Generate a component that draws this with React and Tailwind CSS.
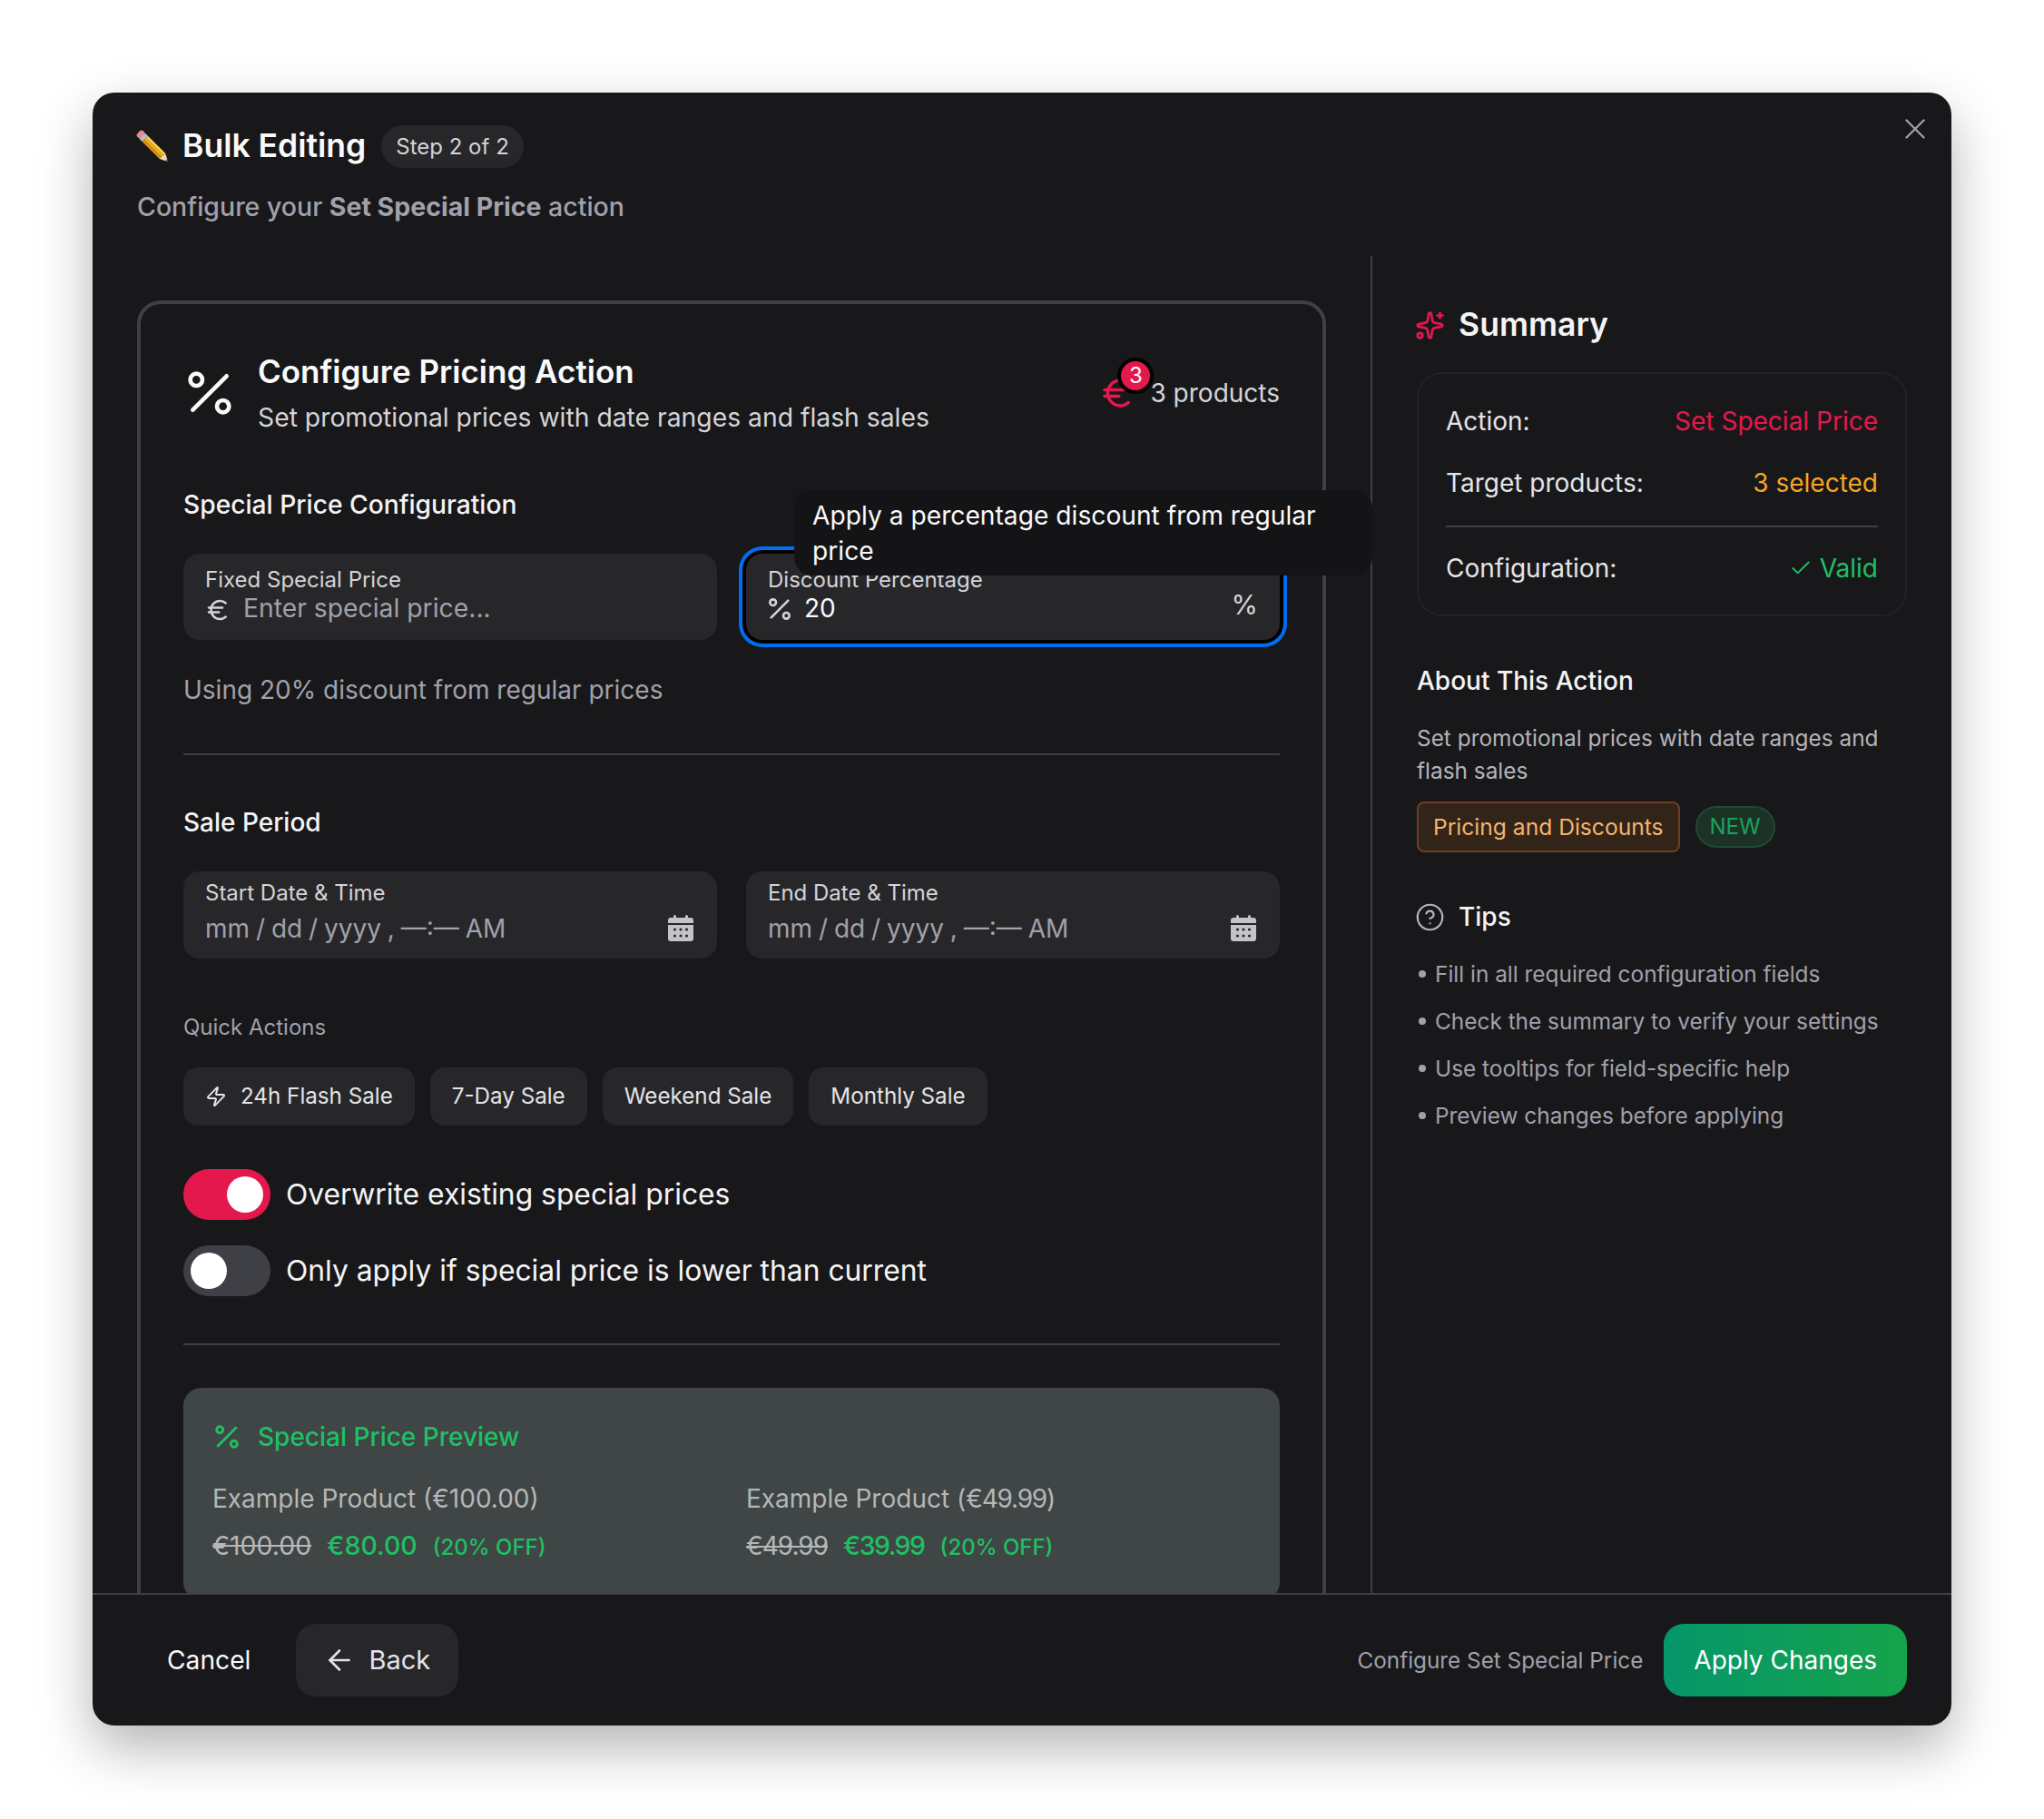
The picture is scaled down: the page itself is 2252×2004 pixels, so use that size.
import { ArrowLeft, Check, CircleHelp, Euro, Percent, Sparkles, X, Zap } from "lucide-react";

function PencilIcon() {
  return (
    <svg width="36" height="36" viewBox="0 0 36 36" className="shrink-0 overflow-visible">
      <g transform="rotate(45 18 18)">
        <rect x="-5" y="13.5" width="7" height="9" rx="2.5" fill="#e58a93" />
        <rect x="1" y="13.5" width="4" height="9" fill="#b8bcc0" />
        <rect x="5" y="13.5" width="27" height="3" fill="#fcd34d" />
        <rect x="5" y="16.5" width="27" height="3" fill="#f5b21b" />
        <rect x="5" y="19.5" width="27" height="3" fill="#d9920f" />
        <path d="M32 13.5 L41 18 L32 22.5 Z" fill="#f3d9b1" />
        <path d="M38 16.5 L41 18 L38 19.5 Z" fill="#3f3f46" />
      </g>
    </svg>
  );
}

function CalendarIcon() {
  return (
    <svg width="32" height="32" viewBox="0 0 32 32" className="shrink-0 text-[#c4c4c8]" fill="currentColor">
      <rect x="8" y="1" width="3" height="6" rx="1.5" />
      <rect x="21" y="1" width="3" height="6" rx="1.5" />
      <path d="M5 4h22a3 3 0 0 1 3 3v3H2V7a3 3 0 0 1 3-3z" />
      <path d="M2 12h28v15a3 3 0 0 1-3 3H5a3 3 0 0 1-3-3z" />
      <g fill="#27272a">
        <circle cx="9.5" cy="17" r="1.6" />
        <circle cx="16" cy="17" r="1.6" />
        <circle cx="22.5" cy="17" r="1.6" />
        <circle cx="9.5" cy="24" r="1.6" />
        <circle cx="16" cy="24" r="1.6" />
        <circle cx="22.5" cy="24" r="1.6" />
      </g>
    </svg>
  );
}

function DateField({ label }) {
  return (
    <div className="h-[96px] rounded-[18px] bg-[#27272a] px-6 pt-[8px]">
      <div className="text-[24px] leading-[32px] text-[#d4d4d8]">{label}</div>
      <div className="mt-[5px] flex items-center justify-between">
        <span className="text-[28px] leading-[36px] text-[#a1a1aa] [word-spacing:-1px]">mm / dd / yyyy , —:— AM</span>
        <CalendarIcon />
      </div>
    </div>
  );
}

function Toggle({ on, label }) {
  return (
    <div className="flex items-center gap-[17px]">
      <div className={`flex h-[56px] w-[96px] items-center rounded-full p-2 ${on ? "justify-end bg-[#e5184d]" : "justify-start bg-[#3f3f46]"}`}>
        <div className="h-10 w-10 rounded-full bg-white" />
      </div>
      <span className="text-[31.8px] leading-[40px] text-[#f4f4f5]">{label}</span>
    </div>
  );
}

export default function App() {
  const tips = [
    "Fill in all required configuration fields",
    "Check the summary to verify your settings",
    "Use tooltips for field-specific help",
    "Preview changes before applying",
  ];

  return (
    <div className="min-h-screen bg-white px-[102px] pt-[102px] font-['Inter',sans-serif]">
      <div className="flex h-[1799px] w-[2048px] flex-col overflow-hidden rounded-[24px] bg-[#18181b] shadow-[0_24px_60px_rgba(0,0,0,0.3)]">
        {/* Header */}
        <div className="relative h-[180px] shrink-0 px-[49px] pt-[36px]">
          <div className="flex items-center">
            <PencilIcon />
            <h1 className="mb-[1px] ml-[14px] text-[35.5px] font-semibold leading-[44px] text-[#fafafa]">Bulk Editing</h1>
            <span className="ml-[17px] rounded-full bg-[#27272a] px-4 py-[6px] text-[24px] leading-[35px] text-[#d4d4d8]">Step 2 of 2</span>
          </div>
          <p className="mt-[25px] text-[28.5px] font-medium leading-[36px] text-[#a1a1aa]">
            Configure your <span className="font-bold">Set Special Price</span> action
          </p>
          <button className="absolute right-[21px] top-[21px] text-[#a1a1aa]">
            <X size={38} strokeWidth={1.5} />
          </button>
        </div>

        {/* Body */}
        <div className="flex min-h-0 flex-1 overflow-hidden">
          <div className="w-[1410px] shrink-0 border-r-2 border-[#3f3f46] px-[49px] pt-[49px]">
            <div className="h-[1600px] rounded-t-[26px] border-4 border-[#3f3f46] px-[47px] pt-[52px]">
              <div className="flex items-center justify-between">
                <div className="flex items-center gap-[21px]">
                  <Percent size={64} className="-ml-[3px] text-[#fafafa]" strokeWidth={1.75} />
                  <div>
                    <h2 className="text-[35px] font-semibold leading-[44px] text-[#fafafa]">Configure Pricing Action</h2>
                    <p className="mt-[11px] text-[28.3px] leading-[36px] text-[#d4d4d8]">Set promotional prices with date ranges and flash sales</p>
                  </div>
                </div>
                <div className="flex items-center gap-[15px]">
                  <div className="relative">
                    <Euro size={42} strokeWidth={2} className="text-[#e5184d]" />
                    <span className="absolute -top-[18px] left-[21px] flex h-10 w-10 items-center justify-center rounded-full border-4 border-black bg-[#e5184d] text-[24px] text-white">3</span>
                  </div>
                  <span className="text-[28px] leading-[36px] text-[#d4d4d8]">3 products</span>
                </div>
              </div>

              <h3 className="mt-[60px] text-[28.2px] font-medium leading-[36px] text-[#f4f4f5]">Special Price Configuration</h3>
              <div className="mt-9 grid grid-cols-2 gap-8">
                <div className="h-[95px] rounded-[18px] bg-[#27272a] px-6 pt-[14px]">
                  <div className="text-[24px] leading-[29px] text-[#d4d4d8]">Fixed Special Price</div>
                  <div className="flex items-center gap-[13px]">
                    <Euro size={30} className="mt-1 -ml-[1px] text-[#d4d4d8]" />
                    <span className="text-[28.3px] leading-[34px] text-[#a1a1aa]">Enter special price...</span>
                  </div>
                </div>
                <div className="relative h-[95px] rounded-[18px] bg-[#27272a] px-6 pt-[14px] shadow-[0_0_0_4px_#000,0_0_0_8px_#006fee]">
                  <div className="text-[24px] leading-[29px] text-[#d4d4d8]">Discount Percentage</div>
                  <div className="flex items-center gap-[11px]">
                    <Percent size={32} className="mt-[2px] -ml-[3px] text-[#d4d4d8]" />
                    <span className="flex-1 text-[28px] leading-[34px] text-[#fafafa]">20</span>
                    <span className="-mt-2 text-[30px] leading-[34px] text-[#d4d4d8]">%</span>
                  </div>
                  <div className="absolute -top-[70px] left-[53px] w-[637px] rounded-[20px] bg-[#141417] px-5 pb-[7px] pt-[9px] text-[28.2px] leading-[39px] text-[#fafafa]">
                    Apply a percentage discount from regular price
                  </div>
                </div>
              </div>
              <p className="mt-[37px] text-[28px] leading-[36px] text-[#a1a1aa]">Using 20% discount from regular prices</p>

              <div className="mt-[52px] h-[2px] bg-[#3f3f46]" />

              <h3 className="mt-[56px] text-[28px] font-medium leading-[36px] text-[#f4f4f5]">Sale Period</h3>
              <div className="mt-9 grid grid-cols-2 gap-8">
                <DateField label="Start Date & Time" />
                <DateField label="End Date & Time" />
              </div>

              <div className="mt-[60px] text-[24px] leading-[32px] text-[#a1a1aa]">Quick Actions</div>
              <div className="mt-7 flex gap-[17px] text-[24.2px] text-[#e4e4e7]">
                <button className="flex h-16 items-center gap-[15px] rounded-[16px] bg-[#27272a] px-6">
                  <Zap size={24} />
                  24h Flash Sale
                </button>
                <button className="h-16 rounded-[16px] bg-[#27272a] px-6">7-Day Sale</button>
                <button className="h-16 rounded-[16px] bg-[#27272a] px-6">Weekend Sale</button>
                <button className="h-16 rounded-[16px] bg-[#27272a] px-6">Monthly Sale</button>
              </div>

              <div className="mt-12 flex flex-col gap-7">
                <Toggle on label="Overwrite existing special prices" />
                <Toggle label="Only apply if special price is lower than current" />
              </div>

              <div className="mt-[52px] h-[2px] bg-[#3f3f46]" />

              <div className="mt-[47px] rounded-[20px] bg-[#404545] px-8 pb-10 pt-9">
                <div className="flex items-center gap-[17px] text-[#1fc064]">
                  <Percent size={34} className="-my-1 -ml-[1px]" />
                  <span className="text-[28px] font-medium leading-[36px]">Special Price Preview</span>
                </div>
                <div className="mt-8 grid grid-cols-2 gap-8">
                  <div>
                    <div className="text-[28px] leading-[36px] text-[#b4b7b8]">Example Product (€100.00)</div>
                    <div className="mt-4 flex items-baseline gap-[17px] leading-[36px]">
                      <span className="text-[28.5px] text-[#b4b7b8] line-through">€100.00</span>
                      <span className="text-[28.5px] font-medium text-[#1fc064]">€80.00</span>
                      <span className="text-[24px] font-medium text-[#1fc064]">(20% OFF)</span>
                    </div>
                  </div>
                  <div>
                    <div className="text-[28px] leading-[36px] text-[#b4b7b8]">
                      Example Product (<span className="tracking-[-1.2px]">€49.99</span>)
                    </div>
                    <div className="mt-4 flex items-baseline gap-[17px] leading-[36px]">
                      <span className="text-[28px] tracking-[-1px] text-[#b4b7b8] line-through">€49.99</span>
                      <span className="text-[28.5px] font-medium tracking-[-1.5px] text-[#1fc064]">€39.99</span>
                      <span className="text-[24px] font-medium text-[#1fc064]">(20% OFF)</span>
                    </div>
                  </div>
                </div>
              </div>
            </div>
          </div>

          {/* Summary */}
          <div className="flex-1 px-[49px] pt-[54px]">
            <div className="flex items-center gap-[15px]">
              <Sparkles size={33} className="-ml-[2px] text-[#e5184d]" />
              <h2 className="text-[35.6px] font-semibold leading-[44px] text-[#f4f4f5]">Summary</h2>
            </div>
            <div className="mt-[30px] rounded-[28px] border-2 border-[#222226] px-[30px] pb-[33px] pt-[34px] text-[28px] leading-[36px] text-[#e4e4e7]">
              <div className="flex justify-between">
                <span>Action:</span>
                <span className="text-[#e5184d]">Set Special Price</span>
              </div>
              <div className="mt-8 flex justify-between">
                <span>Target products:</span>
                <span className="text-[#f5a524]">3 selected</span>
              </div>
              <div className="mt-[29px] h-[2px] bg-[#3f3f46]" />
              <div className="mt-[27px] flex justify-between">
                <span>Configuration:</span>
                <span className="flex items-center gap-[8px] text-[#1fc064]">
                  <Check size={26} strokeWidth={1.75} />
                  Valid
                </span>
              </div>
            </div>

            <h3 className="mt-[53px] text-[28px] font-medium leading-[36px] text-[#f4f4f5]">About This Action</h3>
            <p className="mt-[27px] text-[24.4px] leading-[36px] text-[#b4b4ba]">Set promotional prices with date ranges and flash sales</p>
            <div className="mt-4 flex items-center gap-[17px]">
              <span className="flex h-14 items-center rounded-[8px] border-2 border-[#6e3f1e] bg-[#33241a] px-4 text-[24.6px] text-[#f2b56b]">Pricing and Discounts</span>
              <span className="flex h-[46px] items-center rounded-full border-2 border-[#1f4a33] bg-[#1c3227] px-[14px] text-[24px] text-[#17a35a]">NEW</span>
            </div>

            <div className="mt-[53px] flex items-center gap-[15px]">
              <CircleHelp size={33} strokeWidth={1.6} className="-ml-[2px] text-[#b4b4ba]" />
              <h3 className="text-[28px] font-medium leading-[36px] text-[#f4f4f5]">Tips</h3>
            </div>
            <ul className="mt-[27px] flex flex-col gap-4 text-[24.4px] leading-[36px] text-[#a1a1aa]">
              {tips.map((tip) => (
                <li key={tip} className="flex items-center">
                  <span className="ml-[2px] mr-[10px] h-2 w-2 rounded-full bg-[#a1a1aa]" />
                  {tip}
                </li>
              ))}
            </ul>
          </div>
        </div>

        {/* Footer */}
        <div className="flex h-[146px] shrink-0 items-center justify-between border-t-2 border-[#3f3f46] px-[49px]">
          <div className="flex items-center gap-[17px]">
            <button className="h-20 px-[33px] text-[28.2px] text-[#fafafa]">Cancel</button>
            <button className="flex h-20 items-center gap-[14px] rounded-[22px] bg-[#27272a] pl-[30px] pr-[31px] text-[29px] text-[#e4e4e7]">
              <ArrowLeft size={36} strokeWidth={1.75} />
              Back
            </button>
          </div>
          <div className="flex items-center gap-[23px]">
            <span className="text-[24.3px] text-[#a1a1aa]">Configure Set Special Price</span>
            <button className="h-20 rounded-[22px] bg-gradient-to-r from-[#059669] to-[#16a34a] px-[33px] text-[28px] text-white">Apply Changes</button>
          </div>
        </div>
      </div>
    </div>
  );
}
